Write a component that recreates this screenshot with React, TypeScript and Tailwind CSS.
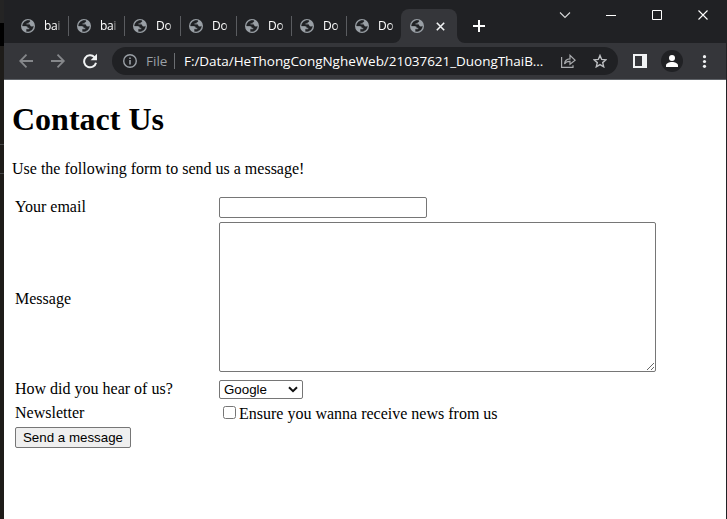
import React from "react";

const tabs = [
  { title: "bai", width: "w-14" },
  { title: "bai", width: "w-14" },
  { title: "Do", width: "w-14" },
  { title: "Do", width: "w-14" },
  { title: "Do", width: "w-[55px]" },
  { title: "Do", width: "w-[55px]" },
  { title: "Do", width: "w-[55px]" },
];

function Globe() {
  return (
    <svg className="block h-3.5 w-3.5 shrink-0" viewBox="0 0 14 14">
      <circle cx="7" cy="7" r="7" fill="#9aa0a6" />
      <path
        d="M8.700 1.400C5 .9 1.700 3.300 1.500 7h3.300c1.300 0 2 .8 2 1.700h1.500v1.500H5.500v2.200c3.600.9 6.800-1.600 6.900-5.300-.7.8-2.800.8-3.300-.6L8.500 5.400H5.500V4.300h1.900c.1-1.200.6-1.300 1.600-1.500z"
        fill="#202124"
        stroke="#202124"
        strokeWidth=".3"
      />
    </svg>
  );
}

function TabStrip() {
  return (
    <div className="flex h-[43px] bg-[#202124] pl-[9px]">
      {tabs.map((tab, i) => (
        <div key={i} className={`flex h-[43px] shrink-0 items-center pt-[9px] pl-2 ${tab.width}`}>
          <Globe />
          <span className="ml-[9px] w-[17px] overflow-hidden text-[12px] leading-4 tracking-[-0.3px] whitespace-nowrap text-white [mask-image:linear-gradient(to_right,black_75%,transparent)]">
            {tab.title}
          </span>
          {i < 6 && <span className="ml-auto h-5 w-px bg-[#5a5c60]" />}
        </div>
      ))}
      <div className="relative mt-[9px] -ml-px flex h-[34px] w-14 shrink-0 items-center rounded-t-lg bg-[#35363a] pl-[9px]">
        <Globe />
        <svg className="ml-3 h-[9px] w-[9px]" viewBox="0 0 9 9" stroke="#f1f3f4" strokeWidth="1.6">
          <path d="M.8.8l7.4 7.4M8.2.8L.8 8.2" />
        </svg>
        <svg className="absolute bottom-0 -left-2 h-2 w-[72px]" viewBox="0 0 72 8" fill="#35363a">
          <path d="M0 8a8 8 0 0 0 8-8v8zM72 8a8 8 0 0 1-8-8v8z" />
        </svg>
      </div>
      <svg className="mt-5 ml-4 h-3 w-3" viewBox="0 0 12 12" stroke="#fff" strokeWidth="2">
        <path d="M6 0v12M0 6h12" />
      </svg>
      <div className="mt-[9px] ml-auto flex pr-[17px]">
        <svg className="h-3 w-[143px] overflow-visible" viewBox="0 0 143 12" fill="none" stroke="#fff">
          <path d="M-6 3.500L-1 8.500L4 3.500" stroke="#d8d9da" strokeWidth="1.100" />
          <path d="M40 6.500h10M86.500 1.500h9v9h-9z" />
          <path d="M132.500 1.500l9 9M141.500 1.500l-9 9" strokeWidth="1.100" />
        </svg>
      </div>
    </div>
  );
}

function Toolbar() {
  return (
    <div className="flex h-[37px] items-center border-b border-[#5f6368] bg-[#35363a] pl-[15px]">
      <svg className="h-4 w-[78px] shrink-0" viewBox="0 0 78 16" fill="none" stroke="#85878a" strokeWidth="1.8">
        <path d="M14 8H1.500M7.500 1.700L1.200 8l6.300 6.300M32 8h12.500M38.500 1.700L44.800 8l-6.300 6.300" />
        <path d="M75.500 4.200A6 6 0 1 0 77 9.700" stroke="#f1f3f4" strokeWidth="2" />
        <path d="M78 .8v6.400h-6.400z" fill="#f1f3f4" stroke="none" />
      </svg>
      <div className="ml-[15px] flex h-7 w-[506px] shrink-0 items-center rounded-full bg-[#202124] pl-[11px]">
        <svg className="h-3.5 w-3.5" viewBox="0 0 14 14" fill="none" stroke="#9aa0a6" strokeWidth="1.4">
          <circle cx="7" cy="7" r="6.3" />
          <path d="M7 6v4.400M7 3.500V5" strokeWidth="1.6" />
        </svg>
        <span className="ml-[9px] w-[22px] text-[13.5px] whitespace-nowrap text-[#9aa0a6]">File</span>
        <span className="ml-1.5 h-4 w-px bg-[#6b6e72]" />
        <span className="ml-[9px] w-[360px] text-[13.5px] tracking-[-0.04px] whitespace-nowrap text-white">
          F:/Data/HeThongCongNgheWeb/21037621_DuongThaiB...
        </span>
        <svg className="ml-[17px] h-3.5 w-[15px]" viewBox="0 0 15 14" fill="none" stroke="#a9abae" strokeWidth="1.2">
          <path d="M.6 3v10.400h11.400v-2.200M3.500 10c.3-3.300 2.500-5 5.500-5.100V1.300l5.200 4.900L9 10.300V7.400C6.500 7.300 4.600 8.100 3.500 10z" />
        </svg>
        <svg className="ml-[17px] h-3.5 w-3.5" viewBox="0 0 14 14" fill="none" stroke="#bcbec1" strokeWidth="1.4">
          <path d="M7 1.400l1.700 4 4.300.4-3.300 2.800 1 4.200L7 10.600l-3.700 2.200 1-4.200L1 5.800l4.300-.4z" />
        </svg>
      </div>
      <svg className="ml-[15px] h-3.5 w-3.5" viewBox="0 0 14 14">
        <path d="M0 0h14v14H0zM2 2v10h7V2z" fill="#f1f3f4" fillRule="evenodd" />
      </svg>
      <svg className="ml-3.5 h-[22px] w-[22px]" viewBox="0 0 22 22">
        <circle cx="11" cy="11" r="11" fill="#202124" />
        <circle cx="11" cy="8" r="3" fill="#fff" />
        <path d="M5 17v-1.500C5 13.300 8 12 11 12s6 1.300 6 3.500V17z" fill="#fff" />
      </svg>
      <svg className="ml-[19px] h-[13px] w-[5px]" viewBox="0 0 5 13" fill="#f1f3f4">
        <circle cx="2.5" cy="1.7" r="1.6" />
        <circle cx="2.5" cy="6.5" r="1.6" />
        <circle cx="2.5" cy="11.3" r="1.6" />
      </svg>
    </div>
  );
}

function ContactForm() {
  return (
    <main className="pt-[21px] pl-2 font-['Liberation_Serif',serif] text-[16px] leading-[18px] text-black">
      <h1 className="text-[32px] leading-[37px] font-bold">Contact Us</h1>
      <p className="mt-[22px]">Use the following form to send us a message!</p>
      <form className="mt-[19px] ml-[3px]">
        <div className="grid grid-cols-[204px_1fr] items-center">
          <label htmlFor="email" className="pb-0.5">Your email</label>
          <input id="email" className="h-[21px] w-[208px] rounded-[2px] border border-[#767676] px-1" />
        </div>
        <div className="mt-1 grid grid-cols-[204px_1fr] items-center">
          <label htmlFor="message" className="pt-1">Message</label>
          <textarea id="message" className="block h-[150px] w-[437px] resize rounded-[2px] border border-[#767676]" />
        </div>
        <div className="mt-2 grid h-[19px] grid-cols-[204px_1fr]">
          <label htmlFor="source">How did you hear of us?</label>
          <div className="relative h-[19px] w-[84px]">
            <select
              id="source"
              className="block h-[19px] w-[84px] appearance-none rounded-[2px] border border-[#767676] bg-white pl-1 font-['Liberation_Sans',sans-serif] text-[13.333px] leading-[17px]"
            >
              <option>Google</option>
            </select>
            <svg className="pointer-events-none absolute top-[6px] right-[5px] h-[7px] w-[10px]" viewBox="0 0 10 7" fill="none" stroke="#101010" strokeWidth="2">
              <path d="M1 1.200l4 4 4-4" />
            </svg>
          </div>
        </div>
        <div className="mt-1 grid h-[21px] grid-cols-[204px_1fr]">
          <span className="pt-px">Newsletter</span>
          <label className="flex items-start">
            <input type="checkbox" className="mt-[3px] mr-[3px] ml-1 h-[13px] w-[13px]" />
            <span className="pt-0.5">Ensure you wanna receive news from us</span>
          </label>
        </div>
        <button
          type="button"
          className="mt-[3px] block h-[21px] w-[116px] rounded-[2px] border border-[#767676] bg-[#efefef] font-['Liberation_Sans',sans-serif] text-[13.333px] leading-[18px] whitespace-nowrap"
        >
          Send a message
        </button>
      </form>
    </main>
  );
}

export default function App() {
  return (
    <div className="flex h-[519px] w-[727px] overflow-hidden bg-white font-['Open_Sans','Noto_Sans',sans-serif]">
      <div className="w-1 shrink-0 bg-[#1e1c19]">
        <div className="h-[23px] bg-[#242424]" />
        <div className="h-[23px] bg-black" />
        <div className="h-[98px]" />
        <div className="h-[30px] border-y border-[#464646]" />
      </div>
      <div className="w-[722px] shrink-0">
        <TabStrip />
        <Toolbar />
        <ContactForm />
      </div>
      <div className="w-px bg-[#202124]" />
    </div>
  );
}
